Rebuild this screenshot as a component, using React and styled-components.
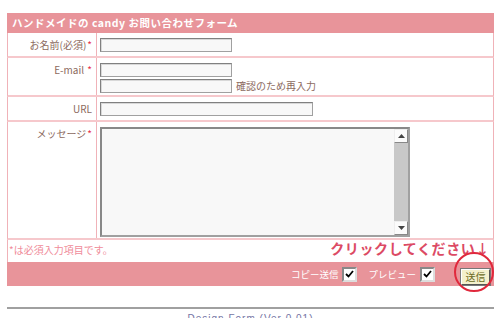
import styled, { createGlobalStyle } from "styled-components";

const GlobalStyle = createGlobalStyle`
  html, body { margin: 0; padding: 0; background: #fff; }
  body {
    font-family: "Noto Sans CJK JP", "Liberation Sans", sans-serif;
    overflow: hidden;
  }
`;

const PINK = "#e8949a";
const LINE = "#f0b2b8";
const SOFT = "#f6c8cc";

const Page = styled.div`
  width: 500px;
  height: 318px;
  padding: 13px 0 0 7px;
  box-sizing: border-box;
  overflow: hidden;
`;

const FormTable = styled.div`
  width: 487px;
`;

const Header = styled.div`
  height: 20px;
  line-height: 20px;
  background: ${PINK};
  color: #fff;
  font-size: 10.5px;
  font-weight: bold;
  padding-left: 5px;
  letter-spacing: 0.5px;
`;

const Row = styled.div`
  display: grid;
  grid-template-columns: 89px 1fr;
  border-left: 1px solid ${LINE};
  border-right: 1px solid ${LINE};
  border-bottom: 2px solid ${SOFT};
`;

const Label = styled.div`
  border-right: 1px solid ${LINE};
  text-align: right;
  padding: 5px 4px 0 0;
  font-size: 10px;
  line-height: 14px;
  color: #8c6a5e;
`;

const Req = styled.span`
  color: #e8304c;
  margin-left: 1px;
`;

const Field = styled.div`
  display: flex;
  flex-direction: column;
  gap: 2px;
  padding: 5px 0 ${p => p.$pb ?? 4}px 3px;
`;

const Line = styled.div`
  display: flex;
  align-items: center;
  gap: 4px;
`;

const Input = styled.div`
  width: ${p => p.$w}px;
  height: 14px;
  box-sizing: border-box;
  background: #f8f8f8;
  border: 1px solid #a0a0a0;
  border-top-color: #808080;
  border-left-color: #808080;
  box-shadow: inset 1px 1px 0 #d8d8d8;
`;

const Hint = styled.span`
  font-size: 10px;
  color: #8c6a5e;
  line-height: 14px;
`;

const TextBox = styled.div`
  width: 310px;
  height: 110px;
  box-sizing: border-box;
  display: flex;
  border: 2px solid #a0a0a0;
  border-top-color: #888;
  border-left-color: #888;
  background: #f8f8f8;
`;

const TextArea = styled.div`
  flex: 1;
`;

const ScrollBar = styled.div`
  width: 14px;
  display: flex;
  flex-direction: column;
  background: #c8c8c8;
`;

const ScrollBtn = styled.div`
  height: 14px;
  box-sizing: border-box;
  background: #fbfbfb;
  border: 1px solid #888;
  border-top-color: #eee;
  border-left-color: #eee;
  display: flex;
  align-items: center;
  justify-content: center;
`;

const Track = styled.div`
  flex: 1;
`;

const NoteRow = styled.div`
  height: 22px;
  display: flex;
  justify-content: space-between;
  align-items: flex-start;
  border-left: 1px solid ${LINE};
  border-right: 1px solid ${LINE};
`;

const Note = styled.span`
  font-size: 10px;
  color: #f08c9a;
  line-height: 14px;
  padding: 3px 0 0 1px;
`;

const ClickHere = styled.span`
  font-size: 14px;
  font-weight: bold;
  color: #dc4a64;
  line-height: 16px;
  letter-spacing: 0.6px;
  padding-right: 3px;
`;

const Footer = styled.div`
  height: 24px;
  background: ${PINK};
  display: flex;
  justify-content: flex-end;
  align-items: center;
  padding-right: 4px;
`;

const Option = styled.label`
  display: flex;
  align-items: center;
  gap: 4px;
  color: #fff;
  font-size: 9.5px;
  margin-right: ${p => p.$mr}px;
`;

const Check = styled.span`
  width: 15px;
  height: 15px;
  box-sizing: border-box;
  background: #fff;
  border: 2px solid #888;
  border-bottom-color: #ddd;
  border-right-color: #ddd;
  display: flex;
  align-items: center;
  justify-content: center;
`;

const SubmitWrap = styled.div`
  position: relative;
`;

const Submit = styled.button`
  width: 29px;
  height: 16px;
  padding: 0;
  background: #f4f0cc;
  color: #6a6a1c;
  font-family: inherit;
  font-size: 10px;
  line-height: 12px;
  border: 1px solid #555;
  border-top-color: #fff;
  border-left-color: #fff;
  outline: 1px solid #777;
`;

const Circle = styled.span`
  position: absolute;
  left: -7px;
  top: -10px;
  width: 40px;
  height: 40px;
  box-sizing: border-box;
  border: 2px solid #e0283c;
  border-radius: 50%;
  pointer-events: none;
`;

const Rule = styled.div`
  width: 487px;
  margin-top: 21px;
  border-top: 2px solid #a0a0a0;
`;

const Credit = styled.div`
  width: 487px;
  text-align: center;
  font-family: "Liberation Sans", sans-serif;
  font-size: 10px;
  color: #7474a4;
  padding-top: 4px;
  letter-spacing: 1px;
`;

const Tick = () => (
  <svg width="9" height="8" viewBox="0 0 9 8">
    <path d="M1 4 L3.5 6.5 L8 1" stroke="#000" strokeWidth="1.8" fill="none" />
  </svg>
);

const Arrow = ({ down }) => (
  <svg width="7" height="4" viewBox="0 0 7 4">
    <path d={down ? "M0 0 H7 L3.5 4 Z" : "M0 4 H7 L3.5 0 Z"} fill="#444" />
  </svg>
);

export default function App() {
  return (
    <Page>
      <GlobalStyle />
      <FormTable>
        <Header>ハンドメイドの candy お問い合わせフォーム</Header>

        <Row>
          <Label>お名前(必須)<Req>*</Req></Label>
          <Field><Input $w={132} /></Field>
        </Row>

        <Row>
          <Label>E-mail <Req>*</Req></Label>
          <Field $pb={2}>
            <Input $w={132} />
            <Line>
              <Input $w={132} />
              <Hint>確認のため再入力</Hint>
            </Line>
          </Field>
        </Row>

        <Row>
          <Label>URL</Label>
          <Field><Input $w={213} /></Field>
        </Row>

        <Row>
          <Label>メッセージ<Req>*</Req></Label>
          <Field $pb={1}>
            <TextBox>
              <TextArea />
              <ScrollBar>
                <ScrollBtn><Arrow /></ScrollBtn>
                <Track />
                <ScrollBtn><Arrow down /></ScrollBtn>
              </ScrollBar>
            </TextBox>
          </Field>
        </Row>

        <NoteRow>
          <Note>*は必須入力項目です。</Note>
          <ClickHere>クリックしてください↓</ClickHere>
        </NoteRow>

        <Footer>
          <Option $mr={11}>コピー送信<Check><Tick /></Check></Option>
          <Option $mr={26}>プレビュー<Check><Tick /></Check></Option>
          <SubmitWrap>
            <Submit>送信</Submit>
            <Circle />
          </SubmitWrap>
        </Footer>
      </FormTable>

      <Rule />
      <Credit>Design Form (Ver 0.01)</Credit>
    </Page>
  );
}
